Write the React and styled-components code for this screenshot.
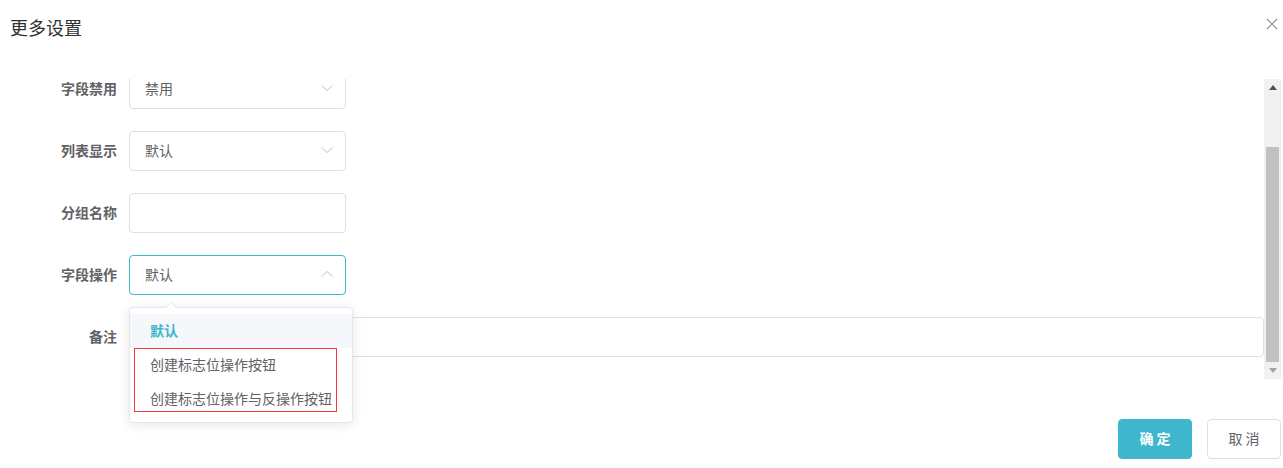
import React, { useLayoutEffect, useRef } from "react";
import styled, { createGlobalStyle } from "styled-components";

const Global = createGlobalStyle`
  html, body { margin: 0; padding: 0; background: #fff; }
  body {
    font-family: "Microsoft YaHei", "Noto Sans CJK SC", "Noto Sans", sans-serif;
    color: #606266;
  }
  * { box-sizing: border-box; }
`;

const TEAL = "#3eb7cd";

const Dialog = styled.div`
  position: relative;
  width: 1283px;
  height: 468px;
  background: #fff;
  display: flex;
  flex-direction: column;
`;

const Header = styled.div`
  height: 79px;
  padding: 15px 10px 0 10px;
  display: flex;
  justify-content: space-between;
  align-items: flex-start;
`;

const Title = styled.div`
  font-size: 18px;
  line-height: 24px;
  color: #303133;
`;

const Close = styled.button`
  border: 0;
  background: none;
  padding: 0;
  margin-top: 2px;
  margin-right: -6px;
  width: 14px;
  height: 14px;
  display: flex;
  align-items: center;
  justify-content: center;
  cursor: pointer;
`;

const BodyRow = styled.div`
  display: flex;
  height: 300px;
  padding-right: 2px;
`;

const Viewport = styled.div`
  flex: 1;
  height: 300px;
  overflow: hidden;
`;

const Form = styled.div`
  display: flex;
  flex-direction: column;
`;

const FormItem = styled.div`
  display: flex;
  align-items: flex-start;
  height: 40px;
  margin-bottom: 22px;
`;

const Label = styled.div`
  width: 129px;
  flex: none;
  padding-right: 12px;
  text-align: right;
  font-size: 14px;
  line-height: 38px;
  font-weight: 700;
  color: #606266;
`;

const Field = styled.div`
  width: ${(p) => (p.$full ? "auto" : "217px")};
  flex: ${(p) => (p.$full ? "1" : "none")};
  height: 40px;
  border: 1px solid ${(p) => (p.$focused ? TEAL : "#dcdfe6")};
  border-radius: 4px;
  padding: 0 11px 2px 15px;
  display: flex;
  align-items: center;
  justify-content: space-between;
  font-size: 14px;
  color: #606266;
  background: #fff;
`;

const Scrollbar = styled.div`
  width: 17px;
  flex: none;
  height: 300px;
  background: #f1f1f1;
  display: flex;
  flex-direction: column;
`;

const ScrollBtn = styled.div`
  height: 17px;
  display: flex;
  align-items: center;
  justify-content: center;
`;

const Track = styled.div`
  flex: 1;
  display: flex;
  flex-direction: column;
  justify-content: flex-end;
  padding: 0 2px;
`;

const Thumb = styled.div`
  height: 215px;
  background: #c1c1c1;
`;

const Footer = styled.div`
  flex: 1;
  display: flex;
  justify-content: flex-end;
  align-items: flex-start;
  padding: 40px 2px 0 0;
  gap: 15px;
`;

const Button = styled.button`
  width: 74px;
  height: 40px;
  border-radius: 4px;
  font-family: inherit;
  font-size: 14px;
  letter-spacing: 3px;
  padding: 0 0 3px 3px;
  border: 1px solid ${(p) => (p.$primary ? TEAL : "#dcdfe6")};
  background: ${(p) => (p.$primary ? TEAL : "#fff")};
  color: ${(p) => (p.$primary ? "#fff" : "#606266")};
  font-weight: ${(p) => (p.$primary ? 700 : 400)};
`;

const Dropdown = styled.div`
  position: absolute;
  left: 129px;
  top: 307px;
  min-width: 217px;
  border: 1px solid #e4e7ed;
  border-radius: 4px;
  background: #fff;
  box-shadow: 0 2px 12px 0 rgba(0, 0, 0, 0.1);
  padding: 6px 0;
  &::before {
    content: "";
    position: absolute;
    top: -6px;
    left: 35px;
    border-left: 6px solid transparent;
    border-right: 6px solid transparent;
    border-bottom: 6px solid #e4e7ed;
  }
  &::after {
    content: "";
    position: absolute;
    top: -5px;
    left: 36px;
    border-left: 5px solid transparent;
    border-right: 5px solid transparent;
    border-bottom: 5px solid #fff;
  }
`;

const Option = styled.div`
  height: 34px;
  line-height: 32px;
  padding: 0 20px;
  font-size: 14px;
  white-space: nowrap;
  color: ${(p) => (p.$selected ? TEAL : "#606266")};
  font-weight: ${(p) => (p.$selected ? 700 : 400)};
  background: ${(p) => (p.$selected ? "#f5f7fa" : "#fff")};
`;

const Marker = styled.div`
  position: absolute;
  left: 4px;
  top: 40px;
  width: 203px;
  height: 64px;
  border: 1px solid #f23a3a;
  pointer-events: none;
`;

const Chevron = ({ up }) => (
  <svg width="14" height="14" viewBox="0 0 14 14">
    <path
      d={up ? "M1.5 9.5 L7 4.5 L12.5 9.5" : "M1.5 4.5 L7 9.5 L12.5 4.5"}
      fill="none"
      stroke="#c0c4cc"
      strokeWidth="1"
    />
  </svg>
);

const Select = ({ value, focused }) => (
  <Field $focused={focused}>
    <span>{value}</span>
    <Chevron up={focused} />
  </Field>
);

export default function App() {
  const vp = useRef(null);
  useLayoutEffect(() => {
    if (vp.current) vp.current.scrollTop = vp.current.scrollHeight;
  }, []);

  return (
    <>
      <Global />
      <Dialog>
        <Header>
          <Title>更多设置</Title>
          <Close aria-label="关闭">
            <svg width="12" height="12" viewBox="0 0 12 12">
              <path d="M1 1 L11 11 M11 1 L1 11" stroke="#909399" strokeWidth="1.1" />
            </svg>
          </Close>
        </Header>
        <BodyRow>
          <Viewport ref={vp}>
            <Form>
              <FormItem aria-hidden="true" />
              <FormItem>
                <Label>字段禁用</Label>
                <Select value="禁用" />
              </FormItem>
              <FormItem>
                <Label>列表显示</Label>
                <Select value="默认" />
              </FormItem>
              <FormItem>
                <Label>分组名称</Label>
                <Field />
              </FormItem>
              <FormItem>
                <Label>字段操作</Label>
                <Select value="默认" focused />
              </FormItem>
              <FormItem>
                <Label>备注</Label>
                <Field $full />
              </FormItem>
            </Form>
          </Viewport>
          <Scrollbar>
            <ScrollBtn>
              <svg width="8" height="5" viewBox="0 0 8 5">
                <path d="M0 5 L4 0 L8 5 Z" fill="#505050" />
              </svg>
            </ScrollBtn>
            <Track>
              <Thumb />
            </Track>
            <ScrollBtn>
              <svg width="8" height="5" viewBox="0 0 8 5">
                <path d="M0 0 L8 0 L4 5 Z" fill="#a3a3a3" />
              </svg>
            </ScrollBtn>
          </Scrollbar>
        </BodyRow>
        <Footer>
          <Button $primary>确定</Button>
          <Button>取消</Button>
        </Footer>
        <Dropdown>
          <Option $selected>默认</Option>
          <Option>创建标志位操作按钮</Option>
          <Option>创建标志位操作与反操作按钮</Option>
          <Marker />
        </Dropdown>
      </Dialog>
    </>
  );
}
